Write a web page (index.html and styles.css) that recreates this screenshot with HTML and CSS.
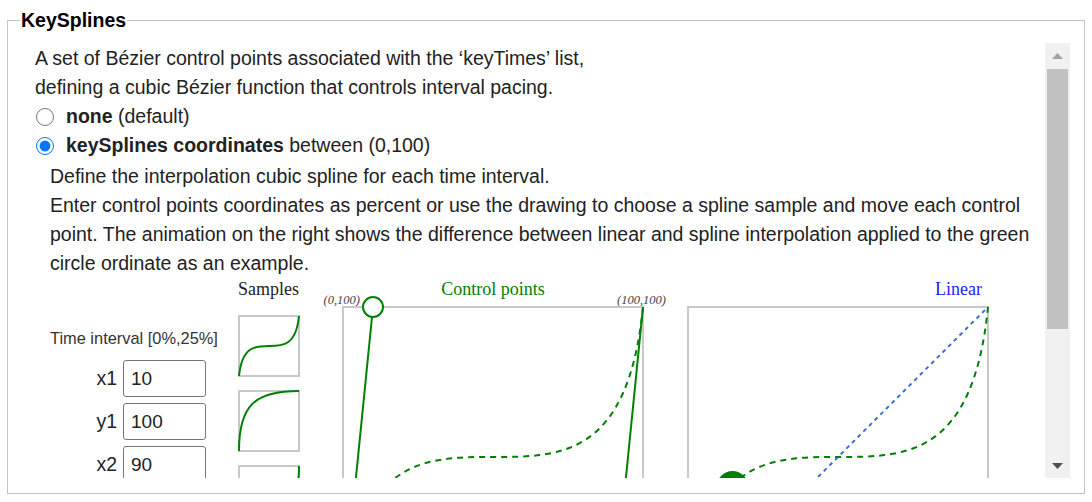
FILE: index.html
```html
<html>
<head>
<title>KeySplines</title>
<link rel="stylesheet" href="styles.css">
</head>
<body>
<fieldset class="panel">
<legend>KeySplines</legend>
<div class="scrollframe">
<div class="scroller">
<p>A set of Bézier control points associated with the ‘keyTimes’ list,<br/>
defining a cubic Bézier function that controls interval pacing.</p>
<label class="option"><input type="radio" name="ks" value="none" /><span><b>none</b> (default)</span></label>
<label class="option"><input type="radio" name="ks" value="coords" checked /><span><b>keySplines coordinates</b> between (0,100)</span></label>
<div class="details">
<p>Define the interpolation cubic spline for each time interval.<br/>
Enter control points coordinates as percent or use the drawing to choose a spline sample and move each control point. The animation on the right shows the difference between linear and spline interpolation applied to the green circle ordinate as an example.</p>
<div class="demo">
<div class="intervals">
<div class="interval-title">Time interval [0%,25%]</div>
<div class="coord"><label>x1</label><input type="text" value="10" /></div>
<div class="coord"><label>y1</label><input type="text" value="100" /></div>
<div class="coord"><label>x2</label><input type="text" value="90" /></div>
<div class="coord"><label>y2</label><input type="text" value="0" /></div>
</div>
<svg class="samples" width="62" height="340">
<text x="0" y="17" class="svg-title">Samples</text>
<g class="sample" transform="translate(1,38)">
<rect x="0" y="0" width="60" height="60" />
<path d="M0,60 C6,0 54,60 60,0" />
</g>
<g class="sample" transform="translate(1,113)">
<rect x="0" y="0" width="60" height="60" />
<path d="M0,60 C0,15 15,0 60,0" />
</g>
<g class="sample" transform="translate(1,188)">
<rect x="0" y="0" width="60" height="60" />
<path d="M0,60 C45,60 60,45 60,0" />
</g>
<g class="sample" transform="translate(1,263)">
<rect x="0" y="0" width="60" height="60" />
<path d="M0,60 C30,60 30,0 60,0" />
</g>
</svg>
<svg class="control" width="350" height="345">
<text x="173" y="17" text-anchor="middle" class="svg-title green">Control points</text>
<text x="40" y="26" text-anchor="end" class="corner">(0,100)</text>
<text x="346" y="26" text-anchor="end" class="corner">(100,100)</text>
<rect class="frame" x="23" y="29" width="300" height="300" />
<path class="spline" d="M23,329 C53,29 293,329 323,29" />
<line class="handle" x1="23" y1="329" x2="53" y2="29" />
<line class="handle" x1="323" y1="29" x2="293" y2="329" />
<circle class="point" cx="53" cy="29" r="10" />
<circle class="point" cx="293" cy="329" r="10" />
</svg>
<svg class="linear" width="320" height="345">
<text x="302" y="17" text-anchor="end" class="svg-title blue">Linear</text>
<rect class="frame" x="8" y="29" width="300" height="300" />
<line class="straight" x1="8" y1="329" x2="308" y2="29" />
<path class="spline" d="M8,329 C38,29 278,329 308,29" />
<circle class="ball" cx="52.5" cy="209" r="16" />
</svg>
</div>
</div>
</div>
<div class="scrollbar">
<div class="arrow"><svg width="11" height="6"><polygon points="0,6 11,6 5.5,0" fill="#a3a3a3" /></svg></div>
<div class="thumb"></div>
<div class="track"></div>
<div class="arrow"><svg width="11" height="6"><polygon points="0,0 11,0 5.5,6" fill="#505050" /></svg></div>
</div>
</div>
</fieldset>
</body>
</html>
```
FILE: styles.css
```css
body {margin:0;font-family:"Liberation Sans",Arial,sans-serif;color:#222;}

.panel {margin:9px 7px 0 7px;padding:12px 14px 15px 12px;border:1px solid #c4c4c4;}
.panel legend {font-size:19.5px;font-weight:bold;line-height:22px;padding:0 1px;color:#000;}

.scrollframe {display:flex;height:435px;}
.scroller {flex:1;overflow:hidden;padding:1px 15px 0 15px;font-size:19.5px;line-height:29px;}
.scroller p {margin:0;}

.scrollbar {width:25px;flex:none;display:flex;flex-direction:column;background:#f1f1f1;}
.arrow {height:25px;display:flex;align-items:center;justify-content:center;flex:none;}
.thumb {height:260px;margin:1px 2px 0 2px;background:#c1c1c1;flex:none;}
.track {flex:1;}

.option {display:flex;align-items:center;gap:12px;}
.option input {width:18px;height:18px;margin:0 0 0 1px;}

.details {padding-left:15px;margin-top:2px;}

.demo {display:flex;align-items:flex-start;padding-bottom:70px;}

.intervals {width:166px;padding-top:50px;margin-right:22px;}
.interval-title {font-size:16.4px;line-height:20px;color:#333;margin-bottom:12px;white-space:nowrap;}
.coord {display:flex;align-items:center;margin-bottom:6px;}
.coord label {width:67px;text-align:right;margin-right:6px;}
.coord input {width:83px;height:37px;box-sizing:border-box;border:1px solid #767676;border-radius:3px;
  padding:0 0 0 7px;font-family:"Liberation Sans",Arial,sans-serif;font-size:19px;color:#222;}

.samples {margin-right:20px;flex:none;}
.control {margin-right:10px;flex:none;}
.linear {flex:none;}

.svg-title {font-family:"Liberation Serif","Times New Roman",serif;font-size:18px;fill:#222;}
.green {fill:#008000;}
.blue {fill:#2222ff;}
.corner {font-family:"Liberation Serif","Times New Roman",serif;font-size:12.5px;font-style:italic;fill:#444;}

.sample rect {fill:#fff;stroke:#c8c8c8;stroke-width:2;}
.sample path {fill:none;stroke:#008000;stroke-width:2;}

.frame {fill:#fff;stroke:#c8c8c8;stroke-width:2;}
.spline {fill:none;stroke:#008000;stroke-width:2;stroke-dasharray:6 5;}
.handle {stroke:#008000;stroke-width:2;}
.point {fill:#fff;stroke:#008000;stroke-width:2;}
.straight {stroke:#4169e1;stroke-width:2;stroke-dasharray:4 4;}
.ball {fill:#008000;}
```
